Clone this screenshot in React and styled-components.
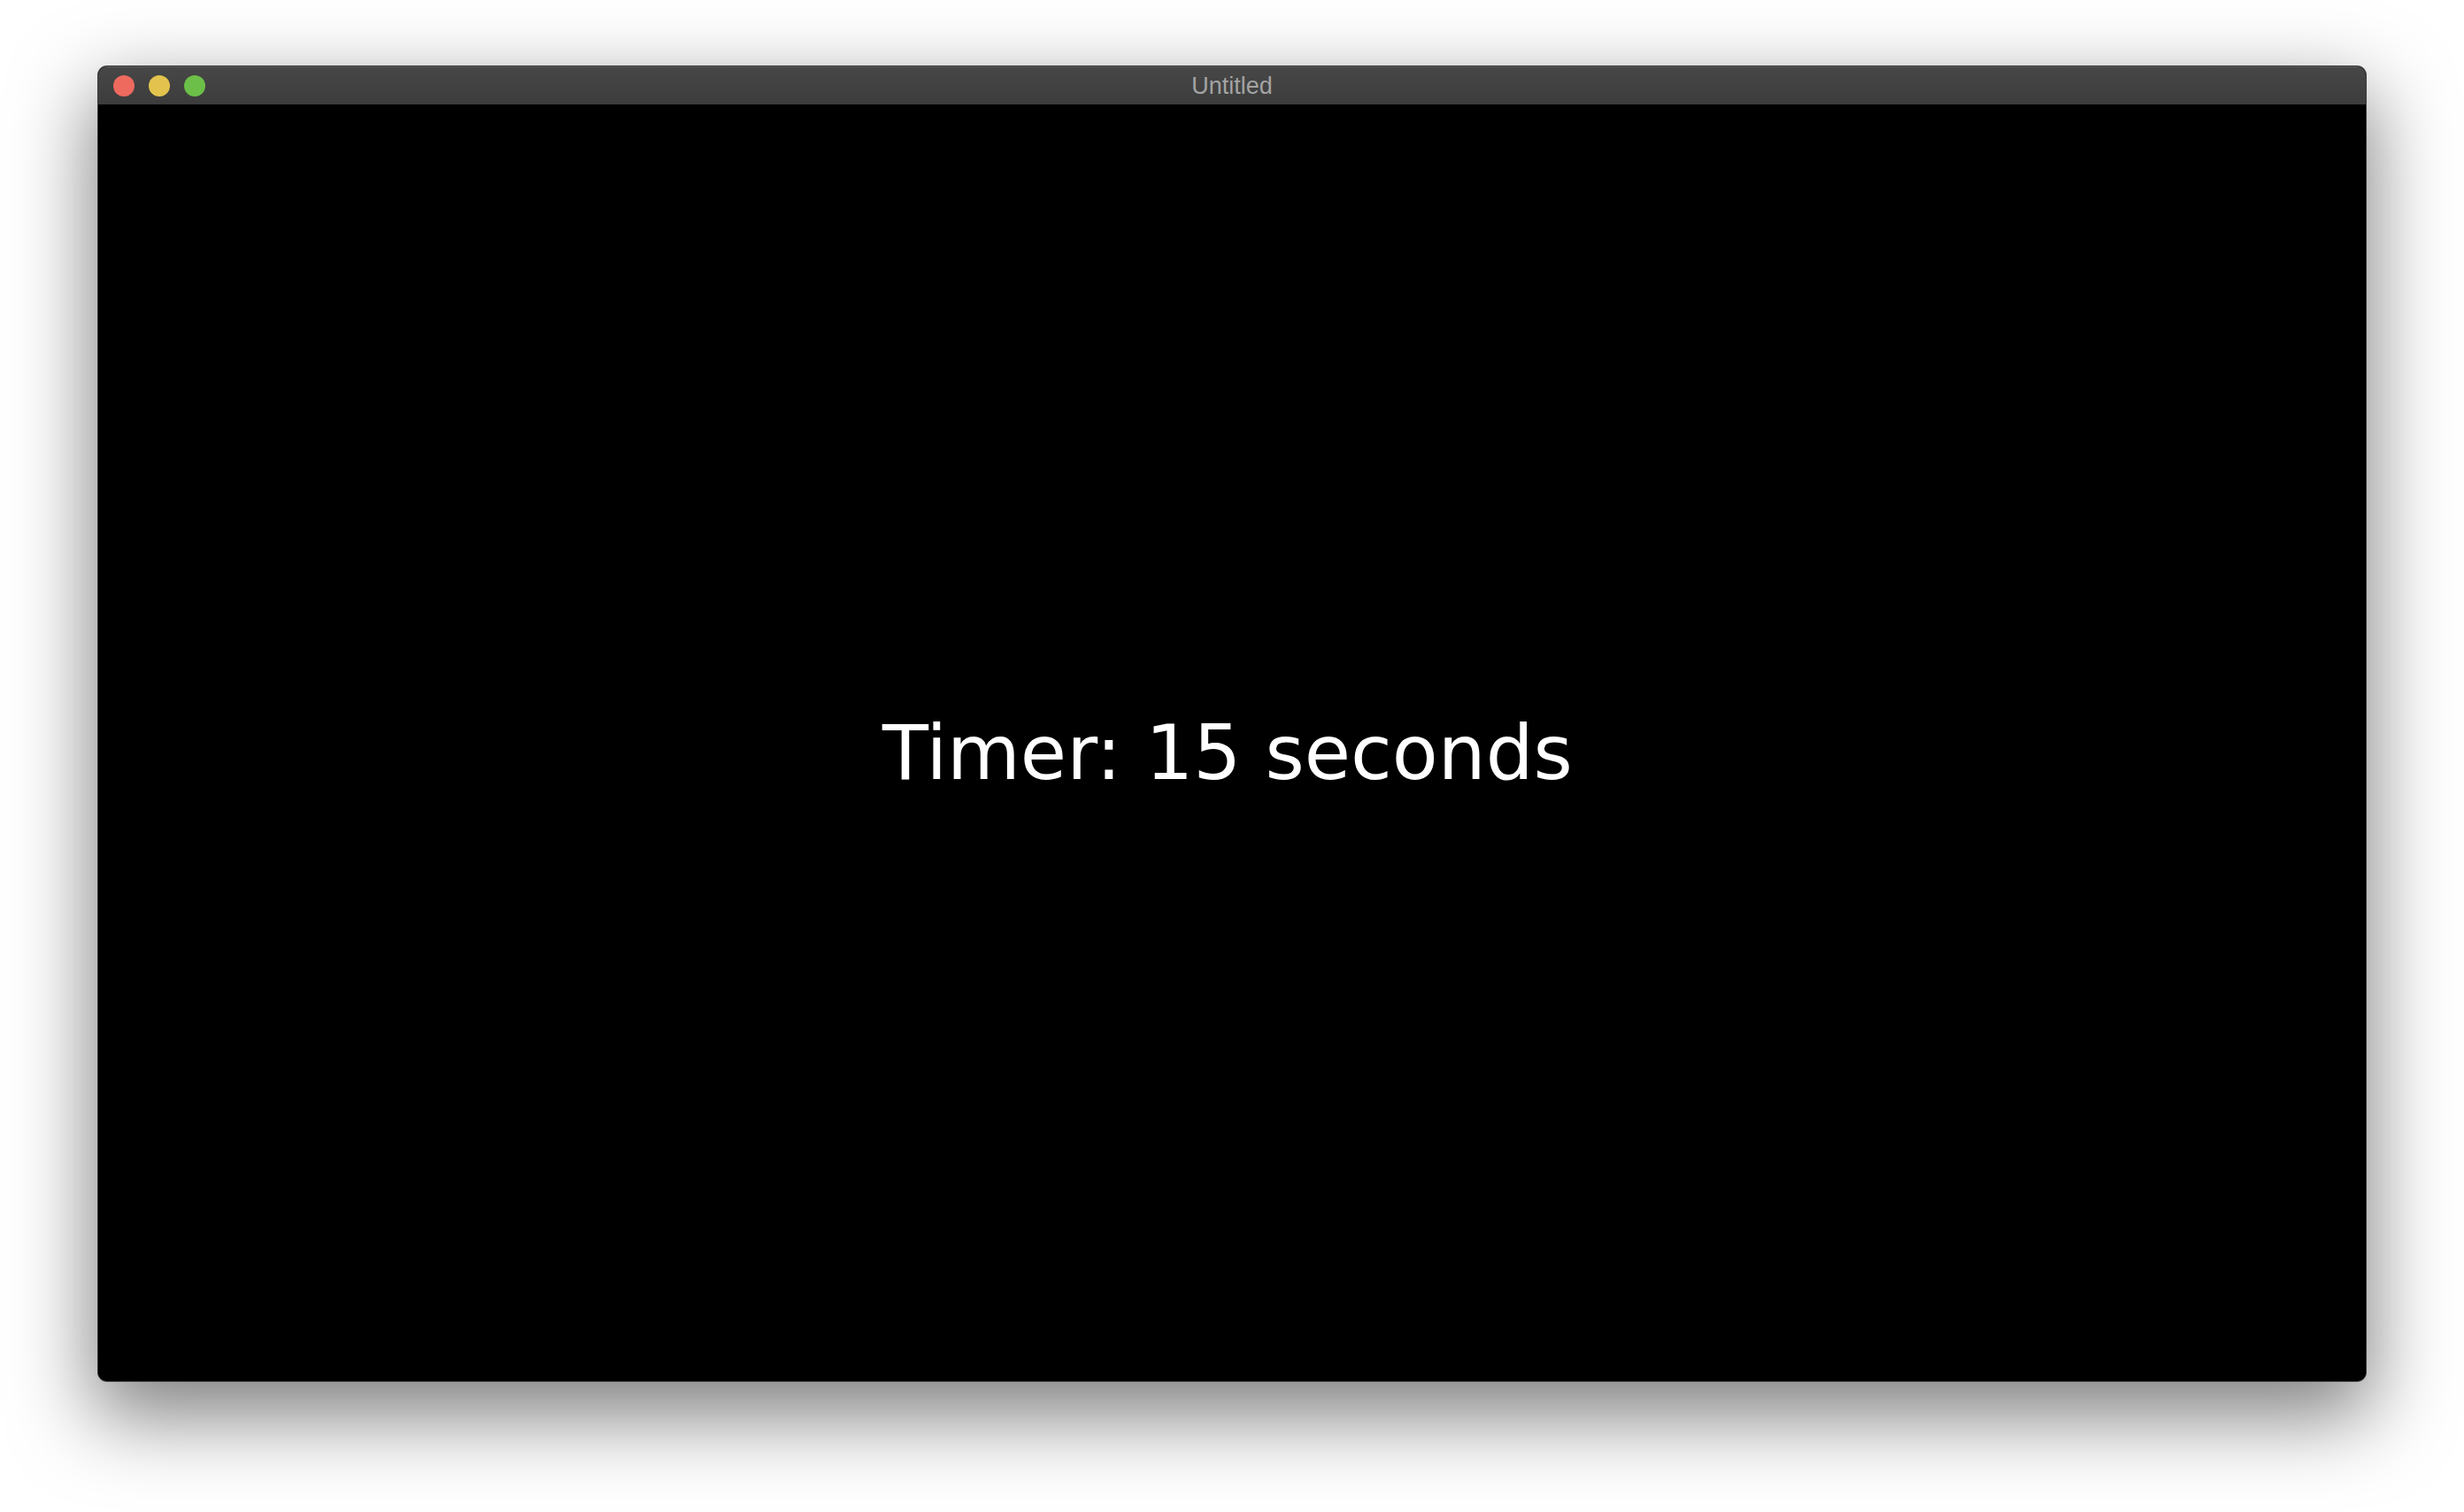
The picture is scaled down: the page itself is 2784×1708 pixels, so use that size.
import React from "react";
import styled, { createGlobalStyle } from "styled-components";

const GlobalStyle = createGlobalStyle`
  html, body {
    margin: 0;
    padding: 0;
    background: #ffffff;
  }
`;

const Page = styled.div`
  width: 2784px;
  height: 1708px;
  box-sizing: border-box;
  padding: 75px 111px 148px 111px;
  background: #ffffff;
`;

const Window = styled.div`
  width: 100%;
  height: 100%;
  display: flex;
  flex-direction: column;
  border-radius: 10px;
  overflow: hidden;
  background: #000;
  box-shadow: 0 0 0 1px rgba(40, 40, 40, 0.9), 0 34px 90px 6px rgba(0, 0, 0, 0.5);
`;

const TitleBar = styled.div`
  position: relative;
  height: 43px;
  flex: none;
  display: flex;
  align-items: center;
  justify-content: center;
  background: linear-gradient(#474747, #3c3c3c);
  border-top: 1px solid #5a5a5a;
  box-sizing: border-box;
`;

const Lights = styled.div`
  position: absolute;
  left: 17px;
  top: 0;
  bottom: 0;
  display: flex;
  align-items: center;
  gap: 16px;
`;

const Light = styled.span`
  width: 24px;
  height: 24px;
  border-radius: 50%;
  background: ${p => p.color};
`;

const Title = styled.div`
  font-family: "Liberation Sans", Arial, sans-serif;
  font-size: 27px;
  color: #a3a3a3;
  line-height: 1;
`;

const Content = styled.div`
  flex: 1;
  display: flex;
  align-items: center;
  justify-content: center;
  padding-top: 23px;
  padding-right: 10px;
  background: #000;
`;

const TimerText = styled.div`
  font-family: "DejaVu Sans", sans-serif;
  font-size: 85px;
  color: #ffffff;
  white-space: nowrap;
`;

const App = () => {
  const seconds = 15;
  return (
    <>
      <GlobalStyle />
      <Page>
        <Window>
          <TitleBar>
            <Lights>
              <Light color="#ee6a5f" />
              <Light color="#e3c34e" />
              <Light color="#6cbf48" />
            </Lights>
            <Title>Untitled</Title>
          </TitleBar>
          <Content>
            <TimerText>Timer: {seconds} seconds</TimerText>
          </Content>
        </Window>
      </Page>
    </>
  );
};

export default App;
